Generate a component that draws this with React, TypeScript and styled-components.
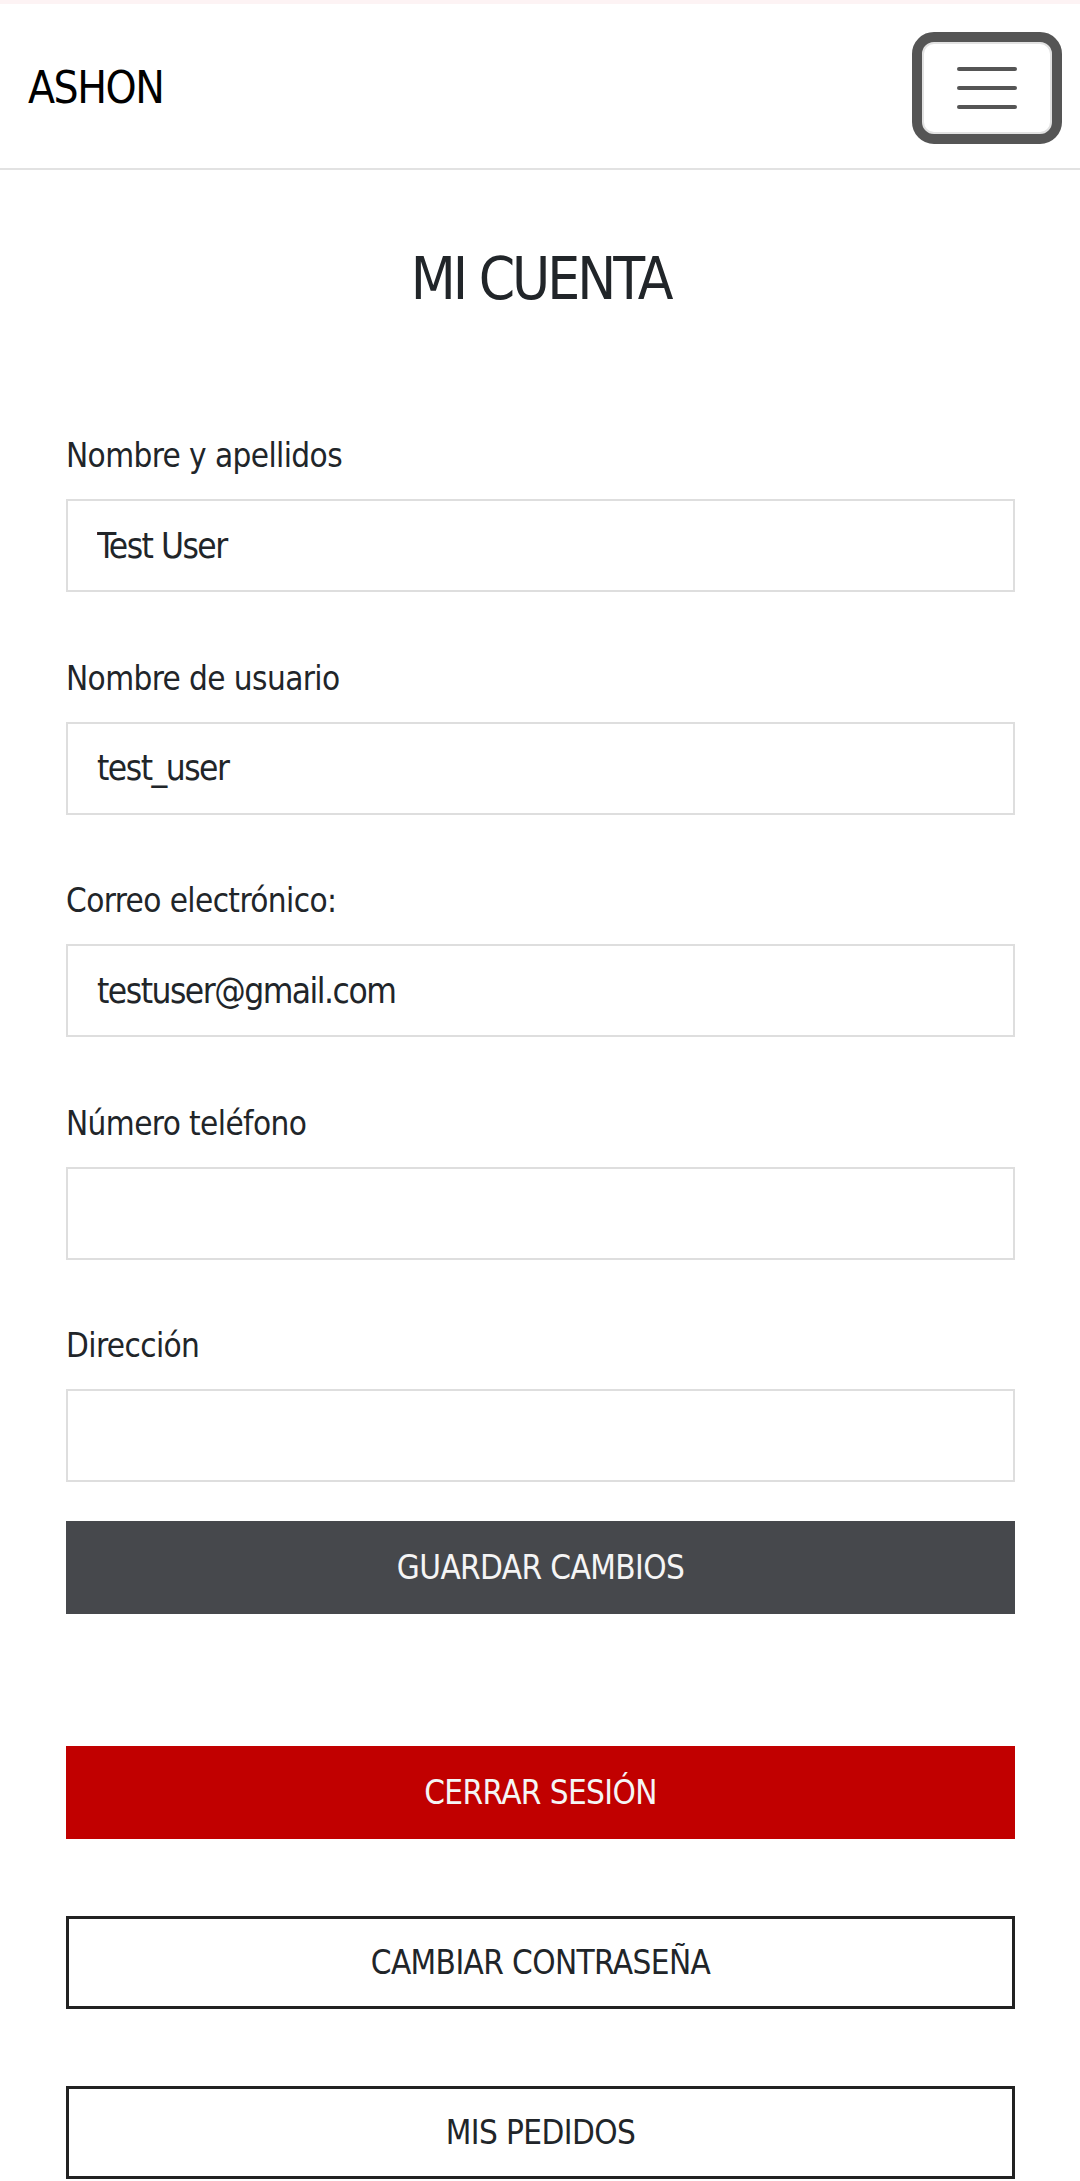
import React from "react";
import styled, { createGlobalStyle } from "styled-components";

const FONT = `"DejaVu Sans Condensed", "Liberation Sans Narrow", "Roboto", sans-serif`;

const Global = createGlobalStyle`
  html, body {
    margin: 0;
    padding: 0;
    background: #ffffff;
  }
  body {
    font-family: ${FONT};
    color: #212529;
  }
  * { box-sizing: border-box; }
`;

const Header = styled.header`
  height: 170px;
  border-top: 4px solid #fdf3f4;
  border-bottom: 2px solid #e2e2e2;
  display: flex;
  align-items: center;
  justify-content: space-between;
  padding: 0 18px 0 28px;
`;

const Brand = styled.a`
  font-size: 44px;
  letter-spacing: -1.5px;
  color: #000;
  text-decoration: none;
  line-height: 1;
  padding-top: 4px;
`;

const Toggler = styled.button`
  width: 150px;
  height: 112px;
  margin-top: 3px;
  border: 10px solid #555555;
  border-radius: 22px;
  background: #fff;
  box-shadow: inset 0 0 0 2px #e2e2e2;
  display: flex;
  align-items: center;
  justify-content: center;
  padding: 0;
`;

const Main = styled.main`
  padding: 0 65px 0 66px;
`;

const Title = styled.h1`
  margin: 73px 0 0;
  font-size: 58px;
  letter-spacing: -3px;
  line-height: 72px;
  font-weight: 400;
  text-align: center;
  color: #212529;
`;

const Form = styled.form`
  margin-top: 117px;
  display: flex;
  flex-direction: column;
  gap: 62.6px;
`;

const Field = styled.div`
  display: flex;
  flex-direction: column;
`;

const Label = styled.label`
  font-size: 33px;
  letter-spacing: -0.6px;
  line-height: 48px;
  margin-bottom: 19px;
  color: #212529;
`;

const Input = styled.input`
  height: 93px;
  width: 100%;
  border: 2px solid #dedede;
  border-radius: 0;
  padding: 0 29px;
  font-family: ${FONT};
  font-size: 35px;
  letter-spacing: -1.5px;
  color: #212529;
  background: #fff;
  outline: none;
`;

const Button = styled.button<{ $variant: "dark" | "danger" | "outline" }>`
  height: 93px;
  width: 100%;
  font-family: ${FONT};
  font-size: 33px;
  letter-spacing: -0.6px;
  text-transform: uppercase;
  border-radius: 0;
  cursor: pointer;
  border: 2px solid
    ${(p) => (p.$variant === "dark" ? "#46484c" : p.$variant === "danger" ? "#c10000" : "#222222")};
  background: ${(p) => (p.$variant === "dark" ? "#46484c" : p.$variant === "danger" ? "#c10000" : "#ffffff")};
  color: ${(p) => (p.$variant === "outline" ? "#212529" : "#f5f5f5")};
  ${(p) => p.$variant === "outline" && "border-width: 3px;"}
`;

const SaveButton = styled(Button)`
  margin-top: -23.6px;
`;

const Actions = styled.div`
  margin-top: 132px;
  display: flex;
  flex-direction: column;
  gap: 77px;
  padding-bottom: 40px;
`;

const fields = [
  { id: "name", label: "Nombre y apellidos", value: "Test User" },
  { id: "username", label: "Nombre de usuario", value: "test_user" },
  { id: "email", label: "Correo electrónico:", value: "testuser@gmail.com" },
  { id: "phone", label: "Número teléfono", value: "" },
  { id: "address", label: "Dirección", value: "" },
];

function MenuIcon() {
  return (
    <svg width="60" height="44" viewBox="0 0 60 44" aria-hidden="true">
      <g stroke="#555555" strokeWidth="4" strokeLinecap="round">
        <line x1="2" y1="3" x2="58" y2="3" />
        <line x1="2" y1="22" x2="58" y2="22" />
        <line x1="2" y1="41" x2="58" y2="41" />
      </g>
    </svg>
  );
}

export default function App() {
  return (
    <>
      <Global />
      <Header>
        <Brand href="#">ASHON</Brand>
        <Toggler type="button" aria-label="Menú">
          <MenuIcon />
        </Toggler>
      </Header>
      <Main>
        <Title>MI CUENTA</Title>
        <Form onSubmit={(e) => e.preventDefault()}>
          {fields.map((f) => (
            <Field key={f.id}>
              <Label htmlFor={f.id}>{f.label}</Label>
              <Input id={f.id} defaultValue={f.value} />
            </Field>
          ))}
          <SaveButton type="submit" $variant="dark">Guardar cambios</SaveButton>
        </Form>
        <Actions>
          <Button type="button" $variant="danger">Cerrar sesión</Button>
          <Button type="button" $variant="outline">Cambiar contraseña</Button>
          <Button type="button" $variant="outline">Mis pedidos</Button>
        </Actions>
      </Main>
    </>
  );
}
